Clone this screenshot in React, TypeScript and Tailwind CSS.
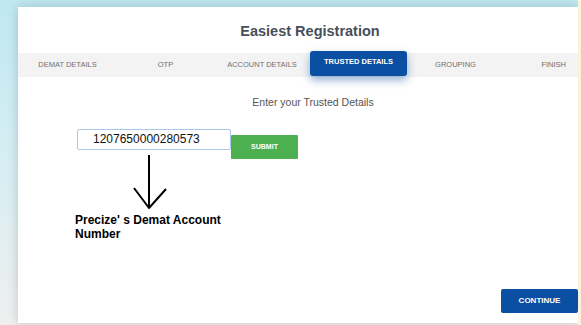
import React from 'react';

const tabs = [
  { label: 'DEMAT DETAILS', w: 'w-[99px]' },
  { label: 'OTP', w: 'w-[97px]' },
  { label: 'ACCOUNT DETAILS', w: 'w-[96px]' },
  { label: 'TRUSTED DETAILS', w: 'w-[97px]', active: true },
  { label: 'GROUPING', w: 'w-[97px]' },
];

export default function App() {
  return (
    <div
      className="w-[581px] h-[325px] overflow-hidden flex bg-gradient-to-b from-[#bfe8f2] via-[#d6eef3] to-[#efefef]"
      style={{ fontFamily: '"Liberation Sans", Arial, sans-serif' }}
    >
      <div className="pl-[18px] pt-[7px]">
        <div className="w-[560px] h-[316px] bg-white shadow-[0_0_10px_rgba(0,0,0,0.18)] flex flex-col">
          <h1 className="h-[46px] flex items-center justify-center pt-[4px] pl-[24px] text-[14.5px] font-bold text-[#474f5c]">
            Easiest Registration
          </h1>

          <div className="h-[24px] bg-[#f3f3f3] flex items-start">
            {tabs.map((t) =>
              t.active ? (
                <div key={t.label} className={`${t.w} -mt-[2px]`}>
                  <div className="h-[25px] rounded-[3px] bg-[#0b4fa2] shadow-[0_4px_9px_rgba(11,79,162,0.45)] flex items-center justify-center pb-[3px] text-[7.5px] font-bold text-white">
                    {t.label}
                  </div>
                </div>
              ) : (
                <div key={t.label} className={`${t.w} h-[24px] flex items-center justify-center text-[7.5px] text-[#707070]`}>
                  {t.label}
                </div>
              )
            )}
            <div className="flex-1 h-[24px] flex items-center justify-end pr-[12px] text-[7.5px] text-[#707070]">
              FINISH
            </div>
          </div>

          <p className="mt-[18px] pl-[30px] text-center text-[10.5px] text-[#555]">Enter your Trusted Details</p>

          <div className="mt-[18px] ml-[59px] flex items-start">
            <div className="w-[154px] h-[21px] border border-[#a9c8ee] rounded-[2px] flex items-center pl-[15px] text-[12px] text-[#111]">
              1207650000280573
            </div>
            <button className="mt-[6px] w-[67px] h-[24px] bg-[#4caf50] rounded-[1px] text-[7px] font-bold text-white">
              SUBMIT
            </button>
          </div>

          <svg className="ml-[114px] -mt-[4px]" width="36" height="56" viewBox="0 0 36 56">
            <path d="M17 0 L17 53" stroke="#000" strokeWidth="2" fill="none" />
            <path d="M2 33 L17 53 L34 34" stroke="#000" strokeWidth="2" fill="none" strokeLinejoin="round" />
          </svg>

          <p className="ml-[57px] mt-[2px] w-[160px] text-[12px] leading-[14px] font-bold text-black">
            Precize' s Demat Account Number
          </p>

          <div className="flex-1 flex items-end justify-end pb-[10px]">
            <button className="w-[77px] h-[24px] bg-[#0b4fa2] rounded-[2px] text-[8px] font-bold text-white">
              CONTINUE
            </button>
          </div>
        </div>
      </div>
      <div className="ml-auto w-[3px] h-full bg-[#fcf2dc]" />
    </div>
  );
}
